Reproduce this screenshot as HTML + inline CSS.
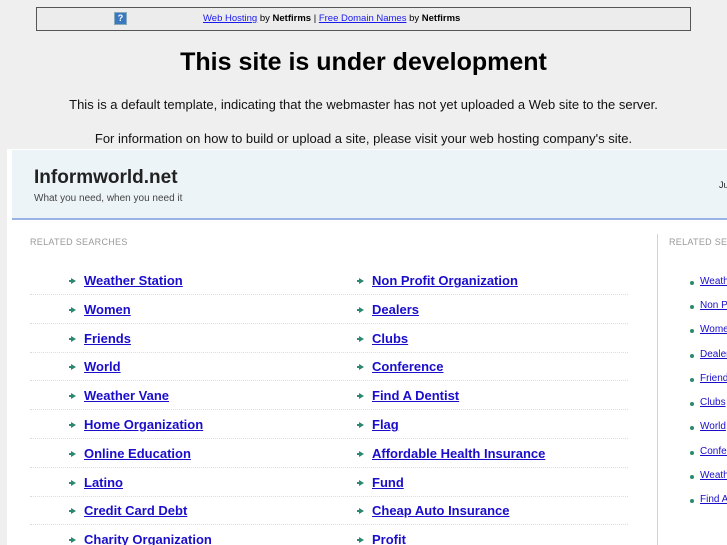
<!DOCTYPE html>
<html><head><meta charset="utf-8"><style>
*{margin:0;padding:0;box-sizing:border-box}
html,body{width:727px;height:545px;overflow:hidden}
body{background:#efefef;font-family:"Liberation Sans",sans-serif;position:relative}
.top{position:absolute;left:36px;top:7px;width:655px;height:24px;border:1px solid #555;background:#ececec;font-size:9.5px;color:#000}
.top .ic{position:absolute;left:77px;top:4px;width:13px;height:13px;background:#3a78c0;border:1px solid #8ab;color:#fff;font-size:9px;font-weight:bold;text-align:center;line-height:11px}
.top .t{position:absolute;left:166px;top:5px;white-space:nowrap}
.top a{color:#1a1aee;text-decoration:underline}
h1{position:absolute;left:0;width:727px;top:48px;text-align:center;font-size:25px;font-weight:bold;color:#000}
.p{position:absolute;left:0;width:727px;text-align:center;font-size:13px;color:#111}
.panel{position:absolute;left:7px;top:149px;width:720px;height:396px;background:#fff;overflow:hidden}
.hdr{position:absolute;left:5px;top:1px;width:715px;height:70px;background:#edf4f7;border-bottom:2px solid #9ab3e6}
.hdr .n{position:absolute;left:22px;top:17px;font-size:19px;font-weight:bold;color:#222}
.hdr .s{position:absolute;left:22px;top:43px;font-size:10px;color:#444}
.hdr .j{position:absolute;left:707px;top:30px;font-size:9px;color:#222;white-space:nowrap}
.rs{position:absolute;font-size:9px;color:#999;letter-spacing:.3px;white-space:nowrap}
.vl{position:absolute;left:650px;top:85px;width:1px;height:320px;background:#c5d3ee}
.row{position:absolute;left:23px;width:598px;height:29px;border-bottom:1px dotted #d4e0e6}
.it{position:absolute;top:7px;font-size:13px;font-weight:bold;white-space:nowrap}
.it:before{content:"";position:absolute;left:-13px;top:5px;border-left:5px solid #2a8a70;border-top:3px solid transparent;border-bottom:3px solid transparent}
.it:after{content:"";position:absolute;left:-15px;top:7px;width:4px;height:2px;background:#2a8a70}
a{color:#1a0dcc;text-decoration:underline}
.sb{position:absolute;left:693px;font-size:10px;white-space:nowrap}
.sb:before{content:"";position:absolute;left:-10px;top:5px;width:4px;height:4px;border-radius:2px;background:#2a8a70}
</style></head><body>
<div class="top"><div class="ic">?</div><div class="t"><a>Web Hosting</a> by <b>Netfirms</b> | <a>Free Domain Names</a> by <b>Netfirms</b></div></div>
<h1>This site is under development</h1>
<div class="p" style="top:97px">This is a default template, indicating that the webmaster has not yet uploaded a Web site to the server.</div>
<div class="p" style="top:131px">For information on how to build or upload a site, please visit your web hosting company's site.</div>
<div class="panel">
<div class="hdr"><div class="n">Informworld.net</div><div class="s">What you need, when you need it</div><div class="j">Jump</div></div>
<div class="rs" style="left:23px;top:88px">RELATED SEARCHES</div>
<div class="rs" style="left:662px;top:88px">RELATED SEARCHES</div>
<div class="vl"></div>
<div class="row" style="top:117px"><span class="it" style="left:54px"><a>Weather Station</a></span><span class="it" style="left:342px"><a>Non Profit Organization</a></span></div>
<div class="row" style="top:146px"><span class="it" style="left:54px"><a>Women</a></span><span class="it" style="left:342px"><a>Dealers</a></span></div>
<div class="row" style="top:175px"><span class="it" style="left:54px"><a>Friends</a></span><span class="it" style="left:342px"><a>Clubs</a></span></div>
<div class="row" style="top:203px"><span class="it" style="left:54px"><a>World</a></span><span class="it" style="left:342px"><a>Conference</a></span></div>
<div class="row" style="top:232px"><span class="it" style="left:54px"><a>Weather Vane</a></span><span class="it" style="left:342px"><a>Find A Dentist</a></span></div>
<div class="row" style="top:261px"><span class="it" style="left:54px"><a>Home Organization</a></span><span class="it" style="left:342px"><a>Flag</a></span></div>
<div class="row" style="top:290px"><span class="it" style="left:54px"><a>Online Education</a></span><span class="it" style="left:342px"><a>Affordable Health Insurance</a></span></div>
<div class="row" style="top:319px"><span class="it" style="left:54px"><a>Latino</a></span><span class="it" style="left:342px"><a>Fund</a></span></div>
<div class="row" style="top:347px"><span class="it" style="left:54px"><a>Credit Card Debt</a></span><span class="it" style="left:342px"><a>Cheap Auto Insurance</a></span></div>
<div class="row" style="top:376px"><span class="it" style="left:54px"><a>Charity Organization</a></span><span class="it" style="left:342px"><a>Profit</a></span></div>
<div class="sb" style="top:127px"><a>Weather Station</a></div>
<div class="sb" style="top:151px"><a>Non Profit Organization</a></div>
<div class="sb" style="top:175px"><a>Women</a></div>
<div class="sb" style="top:200px"><a>Dealers</a></div>
<div class="sb" style="top:224px"><a>Friends</a></div>
<div class="sb" style="top:248px"><a>Clubs</a></div>
<div class="sb" style="top:272px"><a>World</a></div>
<div class="sb" style="top:297px"><a>Conference</a></div>
<div class="sb" style="top:321px"><a>Weather Vane</a></div>
<div class="sb" style="top:345px"><a>Find A Dentist</a></div>
</div>
</body></html>
